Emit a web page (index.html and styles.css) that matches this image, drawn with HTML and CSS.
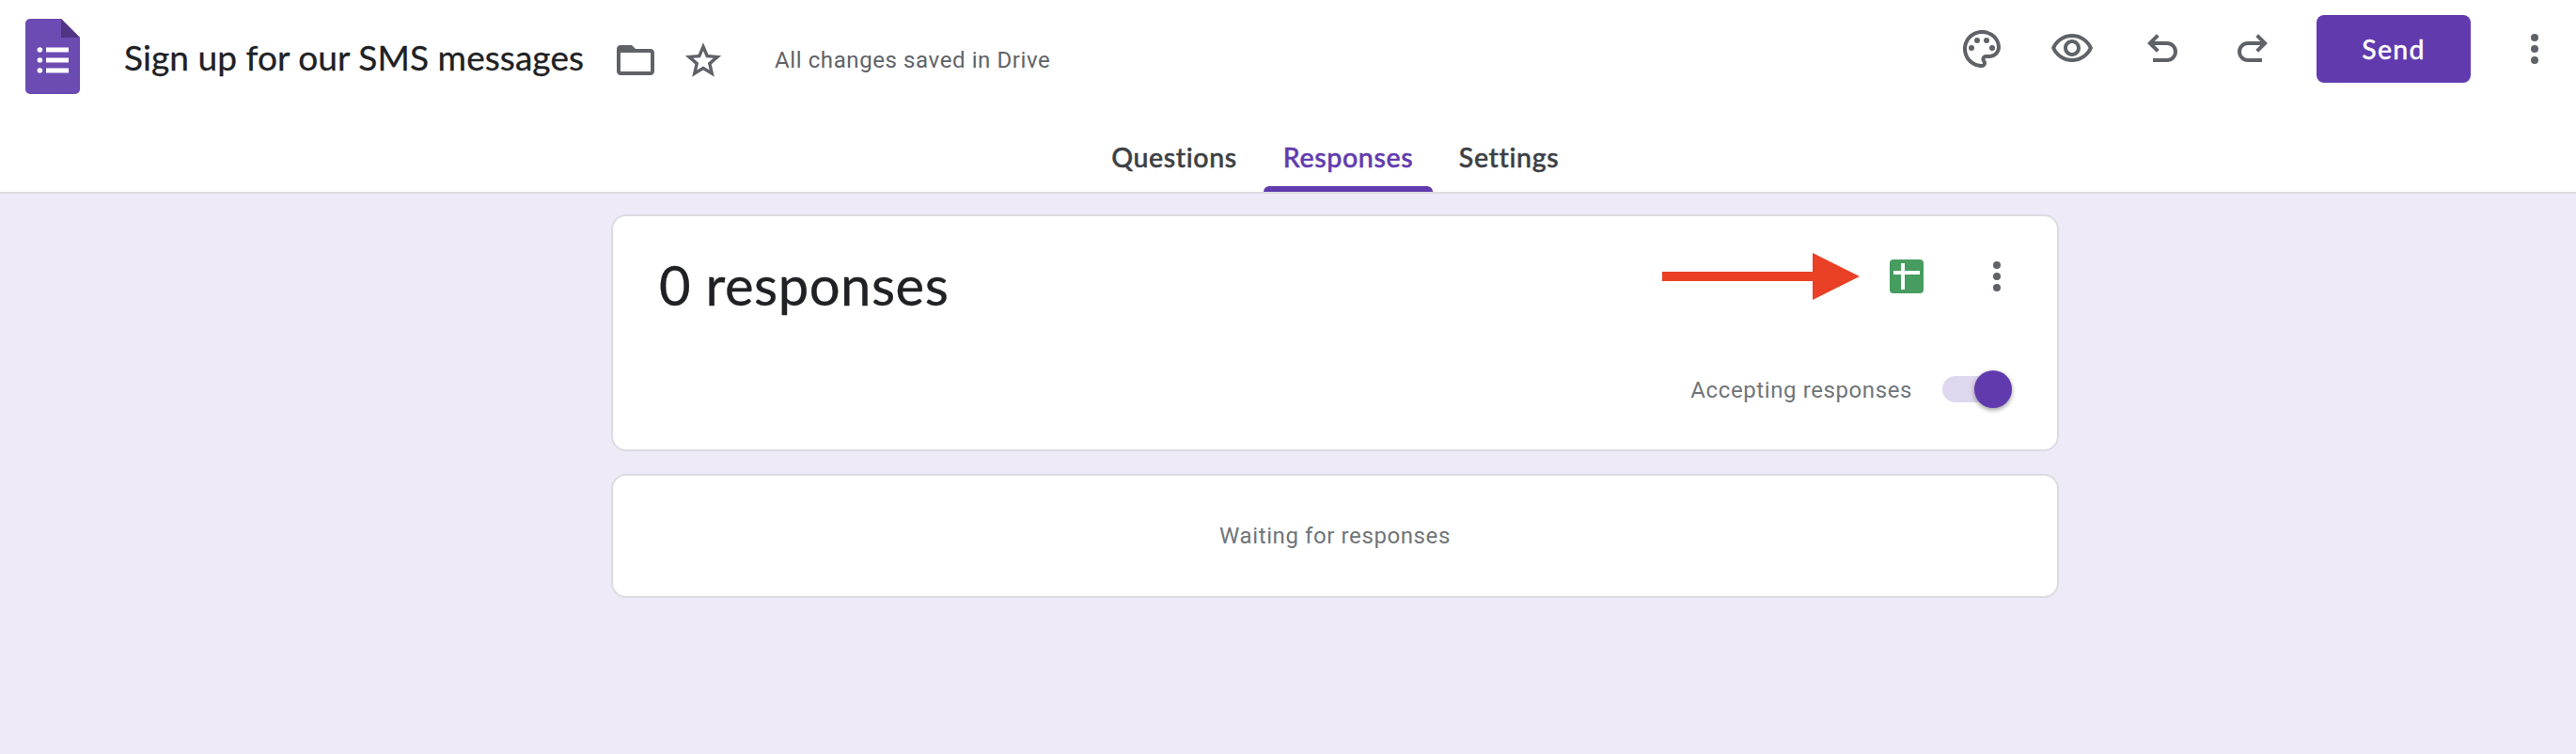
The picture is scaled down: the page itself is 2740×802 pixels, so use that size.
FILE: index.html
```html
<!DOCTYPE html>
<html lang="en">
<head>
<meta charset="utf-8">
<title>Sign up for our SMS messages</title>
<link rel="stylesheet" href="styles.css">
</head>
<body>
<header class="header">
  <div class="topbar">
    <div class="doc">
      <svg class="logo" viewBox="0 0 58 80">
        <path fill="#6c4bb2" d="M5 0H38L58 20V75a5 5 0 0 1-5 5H5a5 5 0 0 1-5-5V5a5 5 0 0 1 5-5z"/>
        <path fill="#513584" d="M38 0L58 20H38z"/>
        <g fill="#fff"><circle cx="15.4" cy="33" r="2.8"/><circle cx="15.4" cy="44" r="2.8"/><circle cx="15.4" cy="55" r="2.8"/><path d="M22 30.5h24v5H22zM22 41.5h24v5H22zM22 52.5h24v5H22z"/></g>
      </svg>
      <h1 class="title">Sign up for our SMS messages</h1>
      <svg class="icon folder" viewBox="0 0 24 24"><path d="M20 6h-8l-2-2H4c-1.1 0-2 .9-2 2v12c0 1.1.9 2 2 2h16c1.1 0 2-.9 2-2V8c0-1.100-.9-2-2-2zm0 12H4V8h16v10z"/></svg>
      <svg class="icon star" viewBox="0 0 24 24"><path d="M22 9.24l-7.190-.62L12 2 9.190 8.630 2 9.240l5.460 4.730L5.820 21 12 17.270 18.180 21l-1.630-7.030L22 9.240zM12 15.100l-3.460 2.090.92-3.940-3.050-2.650 4.030-.35L12 6.540l1.570 3.710 4.030.35-3.050 2.650.92 3.940L12 15.100z"/></svg>
      <span class="status">All changes saved in Drive</span>
    </div>
    <div class="actions">
      <svg class="icon" viewBox="0 0 24 24"><path d="M12 22C6.490 22 2 17.510 2 12S6.490 2 12 2s10 4.040 10 9c0 3.310-2.690 6-6 6h-1.770c-.28 0-.5.22-.5.5 0 .12.05.23.13.33.41.47.64 1.060.64 1.670 0 1.380-1.120 2.500-2.500 2.500zm0-18c-4.410 0-8 3.590-8 8s3.590 8 8 8c.28 0 .5-.22.5-.5 0-.16-.08-.28-.14-.35-.41-.46-.63-1.050-.63-1.650 0-1.380 1.120-2.500 2.500-2.500H16c2.210 0 4-1.790 4-4 0-3.860-3.590-7-8-7z"/><circle cx="6.500" cy="11.500" r="1.500"/><circle cx="9.500" cy="7.500" r="1.500"/><circle cx="14.500" cy="7.500" r="1.500"/><circle cx="17.500" cy="11.500" r="1.500"/></svg>
      <svg class="icon" viewBox="0 0 24 24"><path d="M12 6c3.790 0 7.170 2.130 8.820 5.500C19.170 14.870 15.790 17 12 17s-7.170-2.130-8.820-5.500C4.830 8.130 8.210 6 12 6m0-2C7 4 2.730 7.110 1 11.500 2.730 15.890 7 19 12 19s9.270-3.110 11-7.500C21.270 7.110 17 4 12 4zm0 5c1.380 0 2.500 1.120 2.500 2.500S13.380 14 12 14s-2.500-1.120-2.500-2.500S10.620 9 12 9m0-2c-2.480 0-4.500 2.020-4.500 4.500S9.520 16 12 16s4.500-2.020 4.500-4.500S14.480 7 12 7z"/></svg>
      <svg class="icon line" viewBox="0 0 48 48"><path d="M14 36H29a9 9 0 0 0 0-18H11M19.300 9.600L10.900 18l8.400 8.400"/></svg>
      <svg class="icon line" viewBox="0 0 48 48"><path d="M34 36H19a9 9 0 0 1 0-18H37M28.700 9.600L37.100 18l-8.400 8.400"/></svg>
      <button class="send">Send</button>
      <svg class="icon" viewBox="0 0 24 24"><circle cx="12" cy="6" r="2"/><circle cx="12" cy="12" r="2"/><circle cx="12" cy="18" r="2"/></svg>
    </div>
  </div>
  <nav class="tabs">
    <a class="tab questions">Questions</a>
    <a class="tab responses active">Responses</a>
    <a class="tab settings">Settings</a>
  </nav>
</header>
<main class="main">
  <section class="card summary">
    <div class="summary-head">
      <h2 class="count">0 responses</h2>
      <div class="tools">
        <svg class="arrow" viewBox="0 0 210 50"><path d="M0 20h160V0l50 25-50 25V30H0z"/></svg>
        <svg class="icon" viewBox="0 0 48 48"><rect x="6" y="6" width="36" height="36" rx="4" fill="#479c5f"/><path fill="#fff" d="M18 10h4v8h16v4H22v16h-4V22h-8v-4h8z"/></svg>
        <svg class="icon" viewBox="0 0 24 24"><circle cx="12" cy="6" r="2"/><circle cx="12" cy="12" r="2"/><circle cx="12" cy="18" r="2"/></svg>
      </div>
    </div>
    <div class="accepting">
      <span class="accept-label">Accepting responses</span>
      <span class="toggle"><span class="knob"></span></span>
    </div>
  </section>
  <section class="card waiting"><span class="wait-label">Waiting for responses</span></section>
</main>
</body>
</html>
```
FILE: styles.css
```css
* { box-sizing: border-box; }
body {
  margin: 0;
  min-height: 802px;
  background: #eeeaf7;
  font-family: Roboto, "Liberation Sans", sans-serif;
  white-space: nowrap;
}
.header {
  height: 206px;
  background: #fff;
  border-bottom: 2px solid #dadce0;
}
.topbar {
  height: 120px;
  padding: 0 20px 0 27px;
  display: flex;
  justify-content: space-between;
}
.doc { display: flex; align-items: center; }
.logo { width: 58px; height: 80px; }
.title {
  width: 489px;
  margin: 1px 0 0 47px;
  font: 400 37px/48px Lato, sans-serif;
  letter-spacing: 0.07px;
  -webkit-text-stroke: 0.3px currentColor;
  color: #202124;
}
.icon { width: 48px; height: 48px; flex: none; fill: #5f6368; }
.line { fill: none; stroke: #5f6368; stroke-width: 4; }
.folder { margin: 8px 0 0 31px; }
.star { width: 46px; height: 47px; margin: 8px 0 0 25px; }
.status {
  margin: 7px 0 0 53px;
  font-size: 24px;
  line-height: 32px;
  letter-spacing: 0.6px;
  color: #5f6368;
}
.actions { height: 104px; display: flex; align-items: center; gap: 48px; }
.send {
  width: 164px;
  height: 72px;
  margin: 0 -4px 0 -4px;
  padding: 0;
  border: 0;
  border-radius: 8px;
  background: #613bae;
  color: #fff;
  font: 500 28.5px/40px Lato, sans-serif;
  letter-spacing: 1.2px;
  -webkit-text-stroke: 0.3px currentColor;
}
.tabs {
  height: 84px;
  padding-left: 100px;
  display: flex;
  justify-content: center;
  gap: 8px;
}
.tab {
  display: flex;
  flex-direction: column;
  align-items: center;
  justify-content: space-between;
  padding-top: 23px;
  font: 500 28.5px/48px Lato, sans-serif;
  letter-spacing: 0.65px;
  -webkit-text-stroke: 0.5px currentColor;
  color: #3c4043;
}
.questions { width: 174px; }
.responses { width: 180px; }
.settings { width: 146px; }
.active { color: #613bae; }
.active::after {
  content: "";
  width: 180px;
  height: 6px;
  border-radius: 6px 6px 0 0;
  background: #613bae;
}
.main {
  padding: 22px 0 0 100px;
  display: flex;
  flex-direction: column;
  align-items: center;
  gap: 24px;
}
.card {
  width: 1540px;
  border: 2px solid #dadce0;
  border-radius: 16px;
  background: #fff;
}
.summary { height: 252px; padding: 38px 48px 0 49px; }
.summary-head { display: flex; justify-content: space-between; }
.count {
  margin: 0;
  font: 400 58px/70px Lato, sans-serif;
  letter-spacing: 0.5px;
  -webkit-text-stroke: 0.3px currentColor;
  color: #202124;
}
.tools { display: flex; align-items: center; gap: 48px; height: 52px; margin-right: -8px; }
.arrow { width: 210px; height: 50px; margin-right: -22px; fill: #ea4026; }
.accepting {
  margin-top: 59px;
  display: flex;
  align-items: center;
  justify-content: flex-end;
  gap: 32px;
}
.accept-label, .wait-label {
  font-size: 24px;
  line-height: 32px;
  letter-spacing: 0.6px;
  color: #70757a;
}
.accept-label { padding-top: 2px; }
.toggle {
  width: 74px;
  height: 28px;
  border-radius: 14px;
  background: #dfd7ee;
  display: flex;
  align-items: center;
  justify-content: flex-end;
}
.knob {
  width: 40px;
  height: 40px;
  border-radius: 50%;
  background: #613bae;
  box-shadow: 0 2px 5px rgba(0, 0, 0, .4);
}
.waiting {
  height: 132px;
  display: flex;
  align-items: center;
  justify-content: center;
}
```
